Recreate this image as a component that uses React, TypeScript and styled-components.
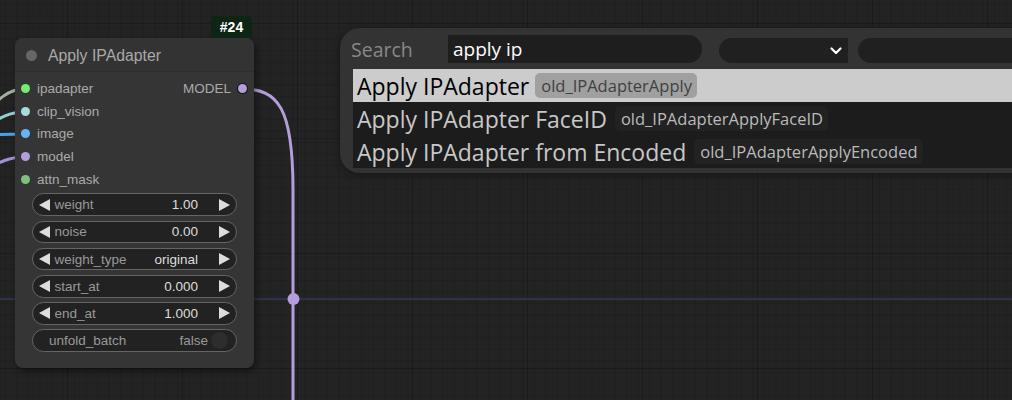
import React from "react";
import styled, { createGlobalStyle, css } from "styled-components";

const GlobalStyle = createGlobalStyle`
  html, body { margin: 0; padding: 0; background: #222; overflow: hidden; }
  * { box-sizing: border-box; }
`;

const Canvas = styled.div`
  position: relative;
  width: 1012px;
  height: 400px;
  overflow: hidden;
  background-color: #232323;
  background-image:
    linear-gradient(to right, rgba(0,0,0,0.22) 1px, transparent 1px),
    linear-gradient(to bottom, rgba(0,0,0,0.22) 1px, transparent 1px),
    linear-gradient(to right, rgba(0,0,0,0.1) 1px, transparent 1px),
    linear-gradient(to bottom, rgba(0,0,0,0.1) 1px, transparent 1px);
  background-size: 115px 115px, 115px 115px, 11.5px 11.5px, 11.5px 11.5px;
  background-position: 67px 0, 0 23px, 5px 0, 0 4px;
  font-family: "Liberation Sans", Arial, sans-serif;
`;

const GroupLine = styled.div`
  position: absolute;
  left: 0;
  right: 0;
  top: 298px;
  height: 2px;
  background: #2c3249;
`;

const Wires = styled.svg`
  position: absolute;
  left: 0;
  top: 0;
  width: 1012px;
  height: 400px;
  pointer-events: none;
`;

const Node = styled.div`
  position: absolute;
  left: 15px;
  top: 38px;
  width: 239px;
  height: 330px;
  background: #353535;
  border-radius: 8px;
  box-shadow: 2px 3px 6px rgba(0,0,0,0.45);
  display: flex;
  flex-direction: column;
`;

const Badge = styled.div`
  position: absolute;
  right: 2px;
  top: -22px;
  height: 22px;
  width: 41px;
  border-radius: 5px 5px 0 0;
  background: #0d2613;
  color: #fff;
  font-weight: bold;
  font-size: 14px;
  display: flex;
  align-items: center;
  justify-content: center;
`;

const TitleBar = styled.div`
  height: 34px;
  display: flex;
  align-items: center;
  padding: 2px 0 0 11px;
  gap: 11px;
  background: #333;
  border-radius: 8px 8px 0 0;
  border-bottom: 1px solid #2e2e2e;
  color: #a9a9a9;
  font-size: 15.8px;
`;

const TitleDot = styled.span`
  width: 11px;
  height: 11px;
  border-radius: 50%;
  background: #666;
`;

const Slots = styled.div`
  padding-top: 5px;
  display: flex;
  flex-direction: column;
`;

const SlotRow = styled.div`
  height: 22.7px;
  display: flex;
  align-items: center;
  justify-content: space-between;
  font-size: 13.5px;
  color: #aaa;
`;

const InputSlot = styled.div`
  display: flex;
  align-items: center;
  padding-left: 5.5px;
  gap: 7.5px;
`;

const OutputSlot = styled.div`
  display: flex;
  align-items: center;
  padding-right: 7.5px;
  gap: 6.5px;
`;

const Dot = styled.span<{ $color: string; $outline?: boolean }>`
  width: 9px;
  height: 9px;
  border-radius: 50%;
  background: ${(p) => p.$color};
  ${(p) => p.$outline && css`box-shadow: 0 0 0 1px #151515;`}
`;

const Widgets = styled.div`
  margin-top: 3px;
  padding: 0 17px;
  display: flex;
  flex-direction: column;
  gap: 4.7px;
`;

const Widget = styled.div<{ $toggle?: boolean }>`
  height: 22.5px;
  border-radius: 12px;
  border: 1px solid #656565;
  background: #222;
  display: flex;
  align-items: center;
  font-size: 13.5px;
  padding: ${(p) => (p.$toggle ? "0 8px 0 16px" : "0 6px 0 6px")};
`;

const Label = styled.span`
  color: #999;
  flex: 1;
  white-space: nowrap;
`;

const Value = styled.span<{ $muted?: boolean }>`
  color: ${(p) => (p.$muted ? "#999" : "#ddd")};
  white-space: nowrap;
`;

const ArrowBox = styled.svg<{ $side: "left" | "right" }>`
  width: 11px;
  height: 12px;
  flex: none;
  margin: ${(p) => (p.$side === "left" ? "0 4.5px 0 0" : "0 0 0 21px")};
`;

const ToggleKnob = styled.span`
  width: 17px;
  height: 17px;
  border-radius: 50%;
  background: #2d2d2d;
  margin-left: 3px;
`;

const Dialog = styled.div`
  position: absolute;
  left: 340px;
  top: 28px;
  width: 700px;
  height: 145px;
  background: #333;
  border-radius: 20px;
  padding: 7px 13px 5px 13px;
  display: flex;
  flex-direction: column;
  gap: 6px;
  font-family: "Open Sans", "Noto Sans", sans-serif;
  box-shadow: 0 2px 8px rgba(0,0,0,0.35);
`;

const Header = styled.div`
  display: flex;
  align-items: flex-end;
  height: 28px;
  & > * { flex: none; }
`;

const SearchLabel = styled.span`
  width: 95px;
  align-self: center;
  color: #888;
  font-size: 19.5px;
  line-height: 1;
  margin-left: -2px;
  margin-top: 1px;
`;

const SearchInput = styled.div`
  width: 254px;
  height: 28px;
  background: #1e1e1e;
  border-radius: 0 14px 14px 0;
  color: #fff;
  font-size: 19px;
  display: flex;
  align-items: center;
  padding-left: 5px;
  margin-left: 2px;
`;

const SelectBox = styled.div`
  width: 129px;
  height: 25px;
  margin-left: 17px;
  background: #202020;
  border-radius: 12.5px 0 0 12.5px;
  display: flex;
  align-items: center;
  justify-content: flex-end;
  padding-right: 6px;
`;

const FilterInput = styled.div`
  width: 200px;
  height: 25px;
  margin-left: 10px;
  background: #202020;
  border-radius: 12.5px;
`;

const Results = styled.div`
  display: flex;
  flex-direction: column;
  background: #1c1c1c;
  height: 99px;
`;

const ResultRow = styled.div<{ $selected?: boolean }>`
  height: 33px;
  display: flex;
  align-items: center;
  padding-left: 4px;
  font-size: 23px;
  white-space: nowrap;
  color: ${(p) => (p.$selected ? "#000" : "#c8c8c8")};
  background: ${(p) => (p.$selected ? "#cccccc" : "transparent")};
`;

const Tag = styled.span<{ $selected?: boolean }>`
  margin-left: ${(p) => (p.$selected ? "6px" : "8px")};
  height: 25px;
  padding: 0 5px 0 6px;
  border-radius: 5px;
  display: inline-flex;
  align-items: center;
  font-size: 16.5px;
  background: ${(p) => (p.$selected ? "#a0a0a0" : "#222")};
  color: ${(p) => (p.$selected ? "#404040" : "#bbb")};
`;

const Arrow = ({ side }: { side: "left" | "right" }) => (
  <ArrowBox $side={side} viewBox="0 0 11 12">
    <polygon
      points={side === "left" ? "11,0 0,6 11,12" : "0,0 11,6 0,12"}
      fill="#ddd"
    />
  </ArrowBox>
);

const inputs = [
  { name: "ipadapter", color: "#6ef06e" },
  { name: "clip_vision", color: "#a8dadc" },
  { name: "image", color: "#64b5f6" },
  { name: "model", color: "#b39ddb" },
  { name: "attn_mask", color: "#7fc27f" },
];

const numberWidgets = [
  { label: "weight", value: "1.00" },
  { label: "noise", value: "0.00" },
  { label: "weight_type", value: "original" },
  { label: "start_at", value: "0.000" },
  { label: "end_at", value: "1.000" },
];

const results = [
  { title: "Apply IPAdapter", tag: "old_IPAdapterApply", selected: true },
  { title: "Apply IPAdapter FaceID", tag: "old_IPAdapterApplyFaceID" },
  { title: "Apply IPAdapter from Encoded", tag: "old_IPAdapterApplyEncoded" },
];

export default function App() {
  return (
    <>
      <GlobalStyle />
      <Canvas>
        <GroupLine />
        <Wires viewBox="0 0 1012 400">
          <path d="M -40 140 C -8 110, 0 89, 25 89" stroke="#9fb39b" strokeWidth="3" fill="none" />
          <path d="M -40 141 C -8 126, 0 112, 25 112" stroke="#8fd0d6" strokeWidth="3" fill="none" />
          <path d="M -40 137 C -10 135, 0 134, 25 134" stroke="#4aa2e6" strokeWidth="3" fill="none" />
          <path d="M -40 183 C -8 169, 0 157, 25 157" stroke="#a48fd6" strokeWidth="3" fill="none" />
          <path d="M 242 89 C 278 89, 293 107, 293 190 L 293 410" stroke="#b39ddb" strokeWidth="3" fill="none" />
          <circle cx="293.5" cy="299" r="6" fill="#b39ddb" />
        </Wires>
        <Node>
          <Badge>#24</Badge>
          <TitleBar>
            <TitleDot />
            <span>Apply IPAdapter</span>
          </TitleBar>
          <Slots>
            {inputs.map((inp, i) => (
              <SlotRow key={inp.name}>
                <InputSlot>
                  <Dot $color={inp.color} />
                  <span>{inp.name}</span>
                </InputSlot>
                {i === 0 && (
                  <OutputSlot>
                    <span>MODEL</span>
                    <Dot $color="#b39ddb" $outline />
                  </OutputSlot>
                )}
              </SlotRow>
            ))}
          </Slots>
          <Widgets>
            {numberWidgets.map((w) => (
              <Widget key={w.label}>
                <Arrow side="left" />
                <Label>{w.label}</Label>
                <Value>{w.value}</Value>
                <Arrow side="right" />
              </Widget>
            ))}
            <Widget $toggle>
              <Label>unfold_batch</Label>
              <Value $muted>false</Value>
              <ToggleKnob />
            </Widget>
          </Widgets>
        </Node>
        <Dialog>
          <Header>
            <SearchLabel>Search</SearchLabel>
            <SearchInput>apply ip</SearchInput>
            <SelectBox>
              <svg width="12" height="8" viewBox="0 0 12 8">
                <polyline points="1.5,1.5 6,6 10.5,1.5" stroke="#fff" strokeWidth="2.2" fill="none" strokeLinecap="round" strokeLinejoin="round" />
              </svg>
            </SelectBox>
            <FilterInput />
          </Header>
          <Results>
            {results.map((r) => (
              <ResultRow key={r.title} $selected={r.selected}>
                {r.title}
                <Tag $selected={r.selected}>{r.tag}</Tag>
              </ResultRow>
            ))}
          </Results>
        </Dialog>
      </Canvas>
    </>
  );
}
